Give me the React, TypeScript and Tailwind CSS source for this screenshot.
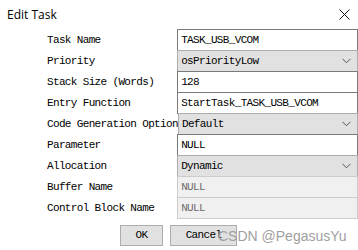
import React from "react";

type Field = {
  label: string;
  value: string;
  kind: "text" | "select" | "disabled";
};

const fields: Field[] = [
  { label: "Task Name", value: "TASK_USB_VCOM", kind: "text" },
  { label: "Priority", value: "osPriorityLow", kind: "select" },
  { label: "Stack Size (Words)", value: "128", kind: "text" },
  { label: "Entry Function", value: "StartTask_TASK_USB_VCOM", kind: "text" },
  { label: "Code Generation Option", value: "Default", kind: "select" },
  { label: "Parameter", value: "NULL", kind: "text" },
  { label: "Allocation", value: "Dynamic", kind: "select" },
  { label: "Buffer Name", value: "NULL", kind: "disabled" },
  { label: "Control Block Name", value: "NULL", kind: "disabled" },
];

const mono = "font-['Liberation_Mono',monospace] text-[11px] tracking-[-0.65px] font-medium";

const Chevron = () => (
  <svg width="9" height="6" viewBox="0 0 9 6" className="mr-[6px]">
    <path d="M0.5 0.8 L4.5 4.8 L8.5 0.8" fill="none" stroke="#555" strokeWidth="1" />
  </svg>
);

const FieldBox: React.FC<{ field: Field }> = ({ field }) => {
  const base = "w-[182px] h-[22px] flex items-center justify-between pl-[3px] border";
  if (field.kind === "select") {
    return (
      <div className={`${base} bg-[#e1e1e1] border-[#adadad]`}>
        <span className={`${mono} text-black`}>{field.value}</span>
        <Chevron />
      </div>
    );
  }
  if (field.kind === "disabled") {
    return (
      <div className={`${base} bg-[#f0f0f0] border-[#cccccc]`}>
        <span className={`${mono} text-[#6d6d6d]`}>{field.value}</span>
      </div>
    );
  }
  return (
    <div className={`${base} bg-white border-[#7a7a7a]`}>
      <span className={`${mono} text-black`}>{field.value}</span>
    </div>
  );
};

export default function App() {
  return (
    <div className="relative w-[358px] h-[250px] bg-white overflow-hidden">
      <div className="h-[29px] flex items-center justify-between pl-[7px] pr-[8px]">
        <span className="font-['Open_Sans',sans-serif] text-[12px] text-black">Edit Task</span>
        <svg width="11" height="11" viewBox="0 0 11 11">
          <path d="M0.5 0.5 L10.5 10.5 M10.5 0.5 L0.5 10.5" stroke="#111" strokeWidth="1" />
        </svg>
      </div>
      <div className="flex flex-col">
        {fields.map((f, i) => (
          <div key={f.label} className={`flex items-center ${i > 0 ? "-mt-px" : ""}`}>
            <div className={`w-[178px] pl-[47px] ${mono} text-black whitespace-nowrap`}>
              {f.label}
            </div>
            <FieldBox field={f} />
          </div>
        ))}
      </div>
      <div className="flex gap-[7px] pl-[120px] mt-[6px]">
        <div className={`w-[43px] h-[21px] flex items-center justify-center bg-[#e1e1e1] border border-[#adadad] ${mono} text-black`}>
          OK
        </div>
        <div className={`w-[67px] h-[21px] flex items-center justify-center bg-[#e1e1e1] border border-[#adadad] ${mono} text-black`}>
          Cancel
        </div>
      </div>
      <div className="absolute left-[218px] top-[226px] font-['Liberation_Sans',sans-serif] text-[14px] text-[#a0a0a0] whitespace-nowrap">
        CSDN @PegasusYu
      </div>
    </div>
  );
}
